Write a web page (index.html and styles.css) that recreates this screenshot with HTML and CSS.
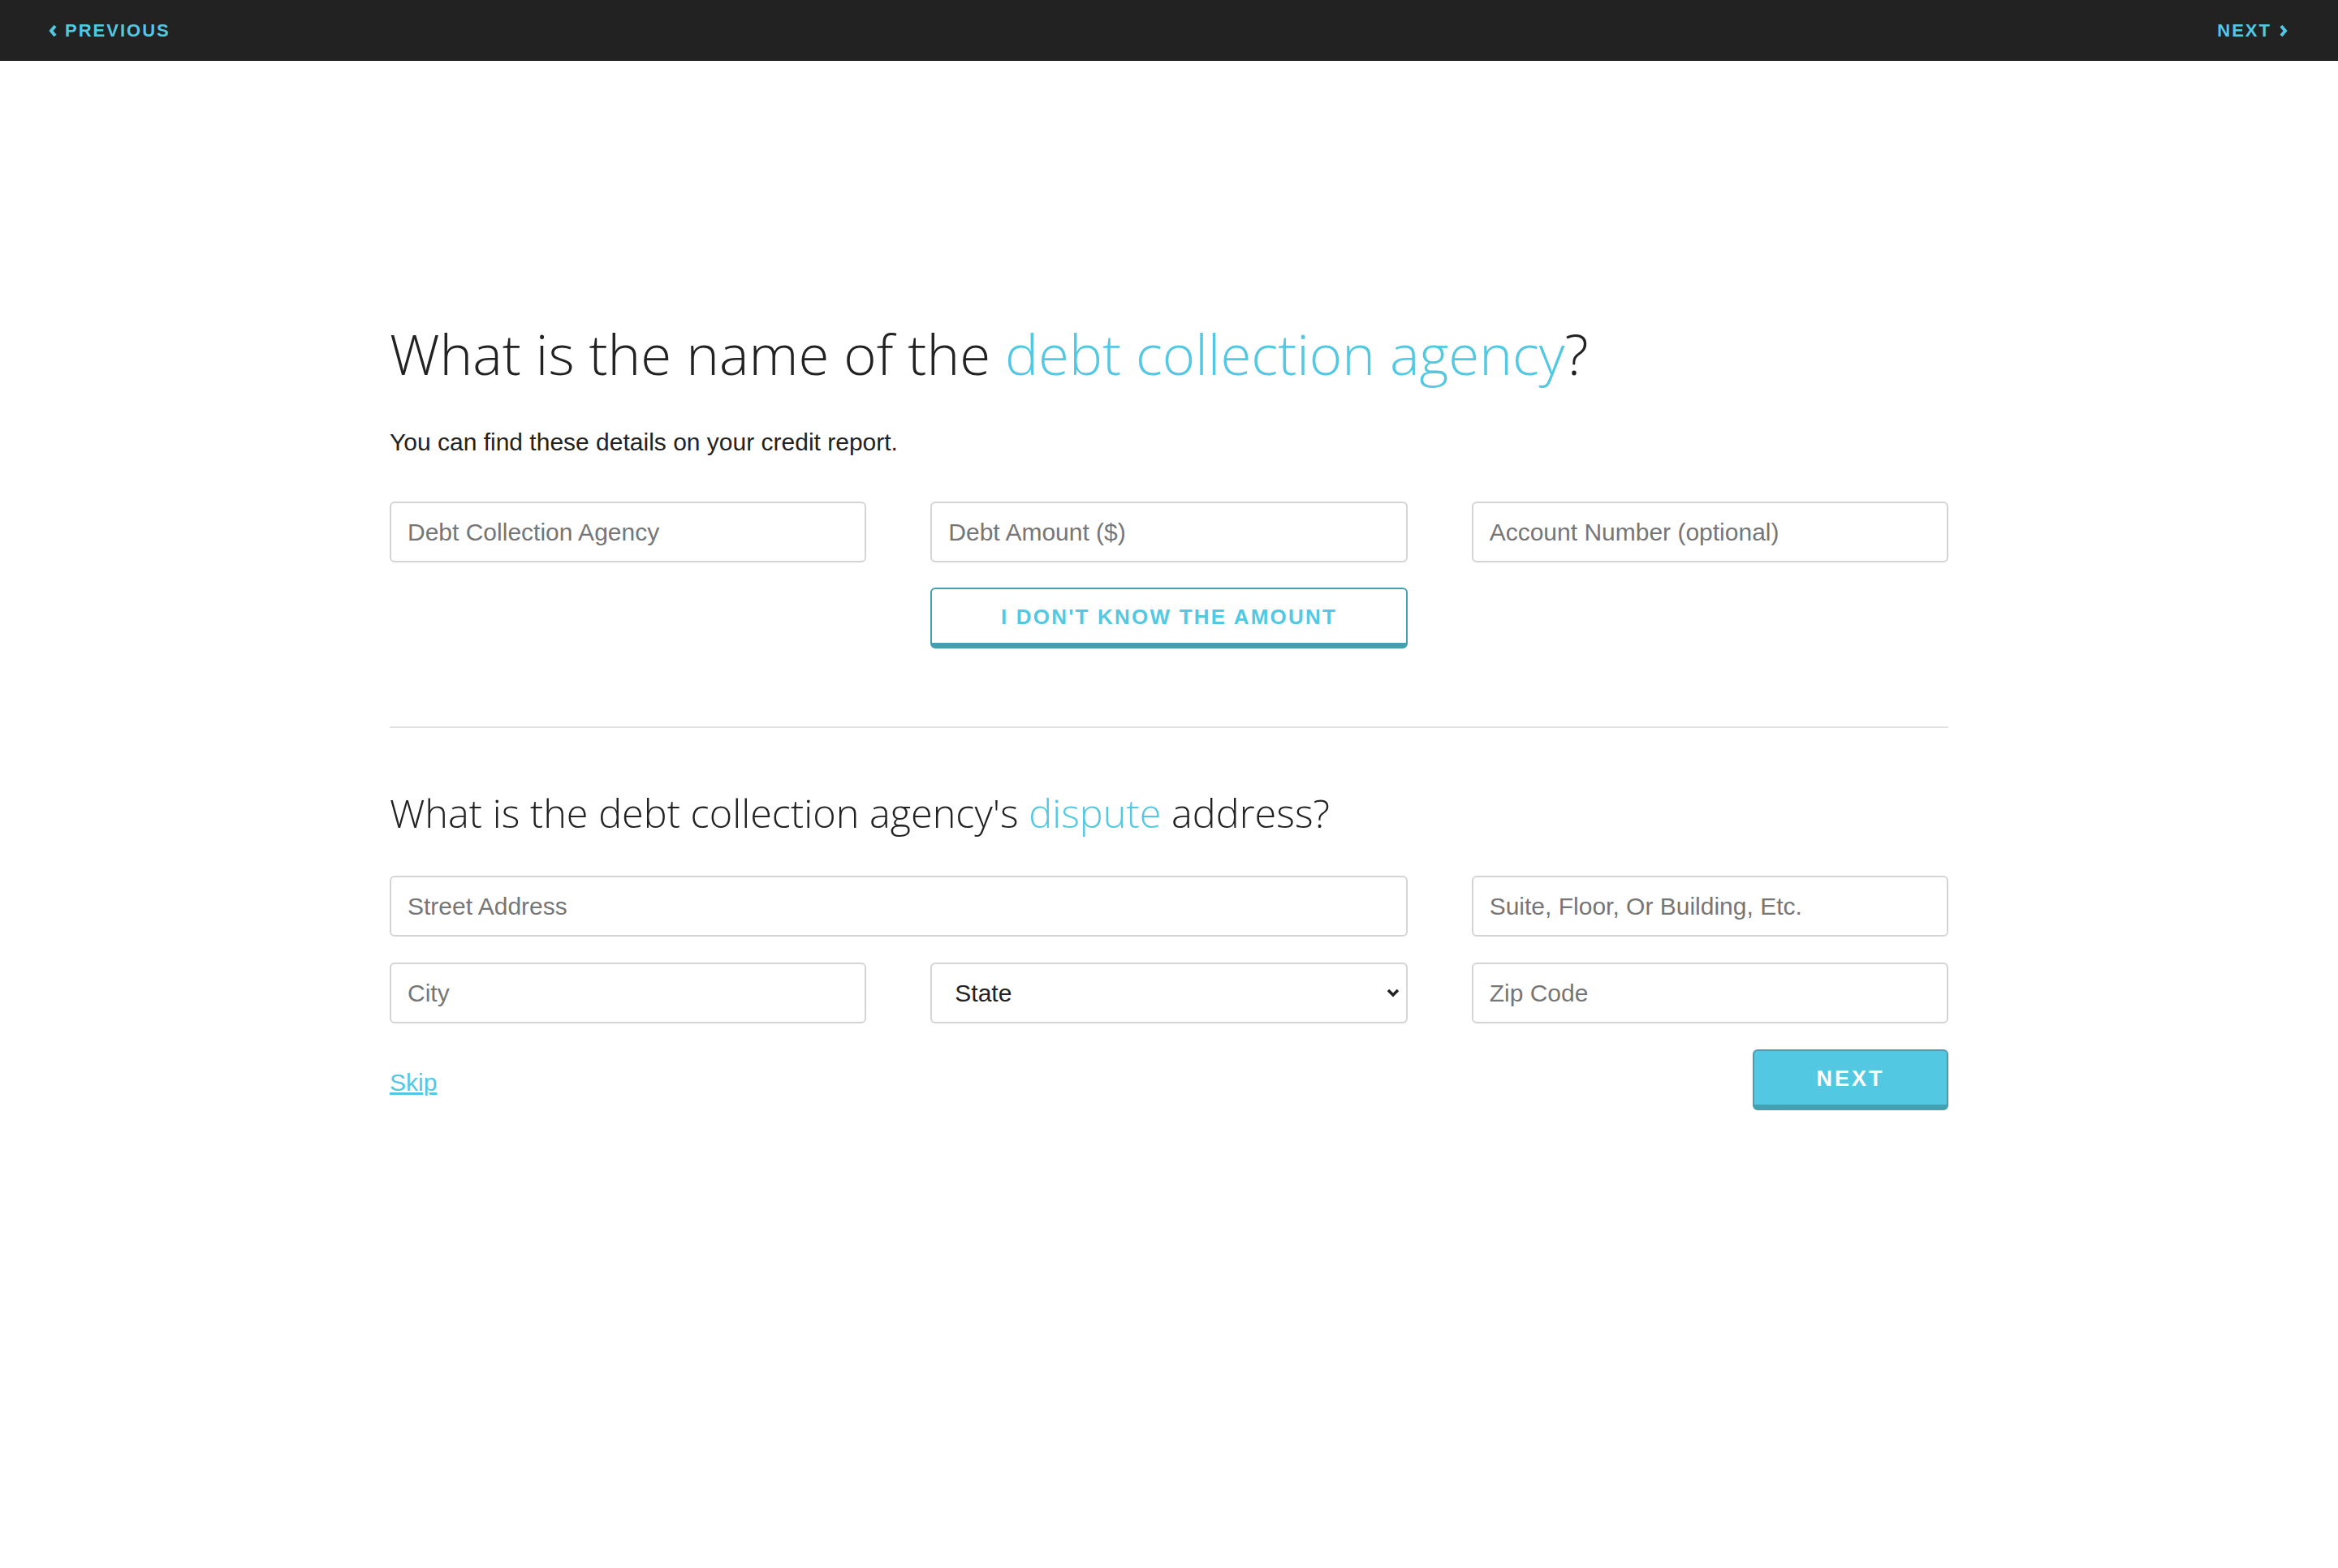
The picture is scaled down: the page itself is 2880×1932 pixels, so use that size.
FILE: index.html
```html
<!DOCTYPE html>
<html lang="en">
<head>
  <meta charset="UTF-8">
  <title>Debt Collection Agency</title>
  <link rel="stylesheet" href="styles.css">
</head>
<body>
  <header class="topbar">
      <a href="#" class="nav-link">
          <svg class="chev" viewBox="0 0 10 16" width="10" height="16"><path d="M8 2 L3 8 L8 14" fill="none" stroke="currentColor" stroke-width="4"/></svg>
          PREVIOUS
      </a>
      <a href="#" class="nav-link">
          NEXT
          <svg class="chev" viewBox="0 0 10 16" width="10" height="16"><path d="M2 2 L7 8 L2 14" fill="none" stroke="currentColor" stroke-width="4"/></svg>
      </a>
  </header>

  <main class="content">
      <h1>What is the name of the <span class="accent">debt collection agency</span>?</h1>
      <p class="lead">You can find these details on your credit report.</p>

      <div class="form-grid">
          <input type="text" placeholder="Debt Collection Agency">
          <input type="text" placeholder="Debt Amount ($)">
          <input type="text" placeholder="Account Number (optional)">
          <button class="outline-btn col-2">I DON'T KNOW THE AMOUNT</button>
      </div>

      <hr class="divider">

      <h2>What is the debt collection agency's <span class="accent">dispute</span> address?</h2>

      <div class="form-grid address">
          <input type="text" class="span-2" placeholder="Street Address">
          <input type="text" placeholder="Suite, Floor, Or Building, Etc.">
          <input type="text" placeholder="City">
          <div class="select-wrap">
              <select>
                  <option>State</option>
              </select>
              <svg class="select-arrow" viewBox="0 0 16 12" width="16" height="12"><path d="M2 2 L8 8 L14 2" fill="none" stroke="#222" stroke-width="3.5"/></svg>
          </div>
          <input type="text" placeholder="Zip Code">
          <div class="skip-cell"><a href="#" class="skip">Skip</a></div>
          <div></div>
          <div class="next-cell"><button class="next-btn">NEXT</button></div>
      </div>
  </main>
</body>
</html>
```

FILE: styles.css
```css
body {
    margin: 0;
    background: #fff;
    font-family: "Liberation Sans", Arial, sans-serif;
    color: #222;
}
.topbar {
    background: #222;
    height: 75px;
    padding: 0 62px 0 60px;
    display: flex;
    align-items: center;
    justify-content: space-between;
}
.nav-link {
    color: #52c8e2;
    font-weight: bold;
    font-size: 22px;
    letter-spacing: 2px;
    text-decoration: none;
    display: flex;
    align-items: center;
    gap: 10px;
}
.chev {
    display: block;
}
.content {
    width: 1920px;
    margin: 0 auto;
    padding-top: 318px;
}
h1, h2 {
    font-family: "Open Sans", sans-serif;
    font-weight: 300;
    color: #222;
    margin: 0;
}
h1 {
    font-size: 69px;
    line-height: 84px;
}
h2 {
    font-size: 48.6px;
    line-height: 60px;
    margin-top: 74px;
}
.accent {
    color: #52c8e2;
}
.lead {
    font-size: 30px;
    line-height: 36px;
    margin: 50px 0 55px;
}
.form-grid {
    display: grid;
    grid-template-columns: repeat(3, 1fr);
    column-gap: 79px;
    row-gap: 31px;
}
.form-grid.address {
    margin-top: 48px;
    row-gap: 32px;
}
.span-2 {
    grid-column: span 2;
}
.col-2 {
    grid-column: 2;
}
input, select {
    box-sizing: border-box;
    height: 75px;
    width: 100%;
    border: 2px solid #d4d4d4;
    border-radius: 6px;
    padding: 0 20px;
    font-family: "Liberation Sans", Arial, sans-serif;
    font-size: 30px;
    color: #222;
    background: #fff;
}
input::placeholder {
    color: #767676;
}
.select-wrap {
    position: relative;
}
select {
    appearance: none;
    -webkit-appearance: none;
    padding-left: 28px;
}
.select-arrow {
    position: absolute;
    right: 10px;
    top: 32px;
}
.outline-btn {
    height: 75px;
    box-sizing: border-box;
    background: #fff;
    border: 2px solid #42a0b0;
    border-bottom-width: 7px;
    border-radius: 6px;
    color: #52c8e2;
    font-family: "Liberation Sans", Arial, sans-serif;
    font-weight: bold;
    font-size: 26px;
    letter-spacing: 2.2px;
    padding-top: 4px;
}
.divider {
    border: none;
    border-top: 2px solid #e2e2e2;
    margin: 96px 0 0;
}
.skip-cell {
    display: flex;
    align-items: center;
}
.skip {
    color: #52c8e2;
    font-size: 30px;
    margin-top: 6px;
}
.next-cell {
    display: flex;
    justify-content: flex-end;
}
.next-btn {
    width: 241px;
    height: 75px;
    box-sizing: border-box;
    background: #52c8e2;
    border: 2px solid #42a0b0;
    border-bottom-width: 7px;
    border-radius: 6px;
    color: #fff;
    font-family: "Liberation Sans", Arial, sans-serif;
    font-weight: bold;
    font-size: 27px;
    letter-spacing: 3px;
    padding-top: 4px;
}
```
